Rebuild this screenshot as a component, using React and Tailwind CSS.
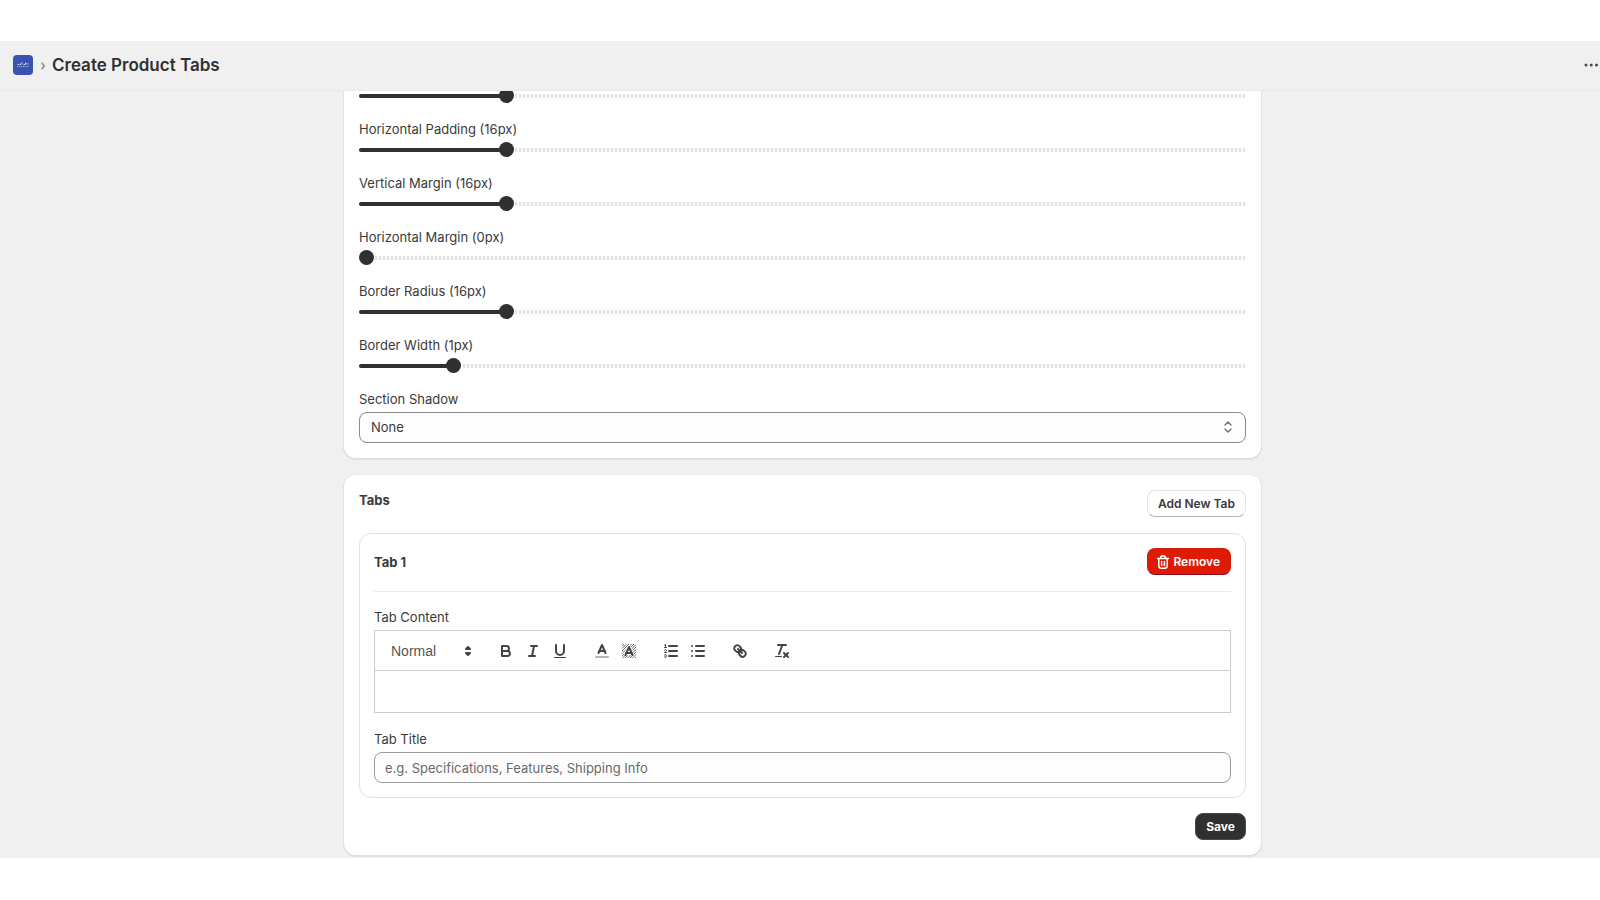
import { useState } from 'react';

const sliders = [
  { id: 'vertical-padding', label: 'Vertical Padding', value: 16, max: 100, hideLabel: true },
  { id: 'horizontal-padding', label: 'Horizontal Padding', value: 16, max: 100 },
  { id: 'vertical-margin', label: 'Vertical Margin', value: 16, max: 100 },
  { id: 'horizontal-margin', label: 'Horizontal Margin', value: 0, max: 100 },
  { id: 'border-radius', label: 'Border Radius', value: 16, max: 100 },
  { id: 'border-width', label: 'Border Width', value: 1, max: 10 },
];

const RangeSlider = ({ id, label, initial, max, hideLabel }) => {
  const [value, setValue] = useState(initial);
  const percent = (value / max) * 100;

  return (
    <div className="flex flex-col gap-[3px]">
      {!hideLabel && (
        <label htmlFor={id} className="leading-5">{label} ({value}px)</label>
      )}
      <div className="relative h-[15px]">
        <div className="absolute inset-x-0 top-[6px] h-1 rounded-full bg-[repeating-linear-gradient(90deg,#e1e1e1_0px,#e1e1e1_2px,#fbfbfb_2px,#fbfbfb_4px)]" />
        {value > 0 && (
          <div
            className="absolute left-0 top-[6px] h-1 rounded-full bg-[#303030]"
            style={{ width: `${percent}%` }}
          />
        )}
        <input
          id={id}
          type="range"
          min="0"
          max={max}
          value={value}
          aria-label={hideLabel ? label : undefined}
          onChange={(e) => setValue(Number(e.target.value))}
          className="absolute inset-0 m-0 h-[15px] w-full cursor-pointer appearance-none bg-transparent [&::-webkit-slider-thumb]:h-[15px] [&::-webkit-slider-thumb]:w-[15px] [&::-webkit-slider-thumb]:appearance-none [&::-webkit-slider-thumb]:rounded-full [&::-webkit-slider-thumb]:bg-[#303030]"
        />
      </div>
    </div>
  );
};

const Icon = ({ children }) => (
  <svg viewBox="0 0 18 18" className="h-[18px] w-[18px]" fill="none" stroke="#444" strokeWidth="2" strokeLinecap="round" strokeLinejoin="round">
    {children}
  </svg>
);

const toolGroups = [
  [
    {
      name: 'Bold',
      icon: (
        <>
          <path d="M5,4H9.5A2.5,2.5,0,0,1,12,6.5v0A2.5,2.5,0,0,1,9.5,9H5V4Z" />
          <path d="M5,9h5.5A2.5,2.5,0,0,1,13,11.5v0A2.5,2.5,0,0,1,10.5,14H5V9Z" />
        </>
      ),
    },
    {
      name: 'Italic',
      icon: (
        <>
          <line x1="7" x2="13" y1="4" y2="4" />
          <line x1="5" x2="11" y1="14" y2="14" />
          <line x1="8" x2="10" y1="14" y2="4" />
        </>
      ),
    },
    {
      name: 'Underline',
      icon: (
        <>
          <path d="M5,3V9a4.012,4.012,0,0,0,4,4H9a4.012,4.012,0,0,0,4-4V3" />
          <rect x="3" y="15" width="12" height="1" rx="0.5" fill="#444" stroke="none" />
        </>
      ),
    },
  ],
  [
    {
      name: 'Text color',
      icon: (
        <>
          <line x1="3" x2="15" y1="15" y2="15" opacity="0.4" />
          <polyline points="5.5 11 9 3 12.5 11" />
          <line x1="11.63" x2="6.38" y1="9" y2="9" />
        </>
      ),
    },
    {
      name: 'Background color',
      icon: (
        <>
          {/* hatching */}
          <path
            strokeWidth="0.8"
            strokeLinecap="butt"
            d="M2,4L4,2M2,6.5L6.5,2M2,9L9,2M2,11.5L11.5,2M2,14L14,2M2.5,16L16,2.5M5,16L16,5M7.5,16L16,7.5M10,16L16,10M12.5,16L16,12.5M15,16L16,15"
          />
          <path stroke="#fff" strokeWidth="4" strokeLinecap="butt" d="M5.5 13L9 5l3.5 8M11.5 11h-5" />
          <polyline points="5.5 13 9 5 12.5 13" />
          <line x1="11.63" x2="6.38" y1="11" y2="11" />
        </>
      ),
    },
  ],
  [
    {
      name: 'Numbered list',
      icon: (
        <>
          <line x1="7" x2="15" y1="4" y2="4" />
          <line x1="7" x2="15" y1="9" y2="9" />
          <line x1="7" x2="15" y1="14" y2="14" />
          <g strokeWidth="1">
            <path d="M2.5,5.5h2M2.6,3L3.5,2.5V5.5" />
            <path d="M4.5,10.5h-2c0-.234,1.85-1.076,1.85-2.234A0.959,0.959,0,0,0,2.5,8.156" />
            <path d="M2.5,14.846a0.959,0.959,0,0,0,1.85-.109A0.7,0.7,0,0,0,3.75,14a0.688,0.688,0,0,0,.6-0.736,0.959,0.959,0,0,0-1.85-.109" />
          </g>
        </>
      ),
    },
    {
      name: 'Bulleted list',
      icon: (
        <>
          <line x1="7" x2="15" y1="4" y2="4" />
          <line x1="7" x2="15" y1="9" y2="9" />
          <line x1="7" x2="15" y1="14" y2="14" />
          <g fill="#444" stroke="none">
            <circle cx="3" cy="4" r="1" />
            <circle cx="3" cy="9" r="1" />
            <circle cx="3" cy="14" r="1" />
          </g>
        </>
      ),
    },
  ],
  [
    {
      name: 'Link',
      icon: (
        <>
          <line x1="7" x2="11" y1="7" y2="11" />
          <path d="M8.9,4.577a3.476,3.476,0,0,1,.36,4.679A3.476,3.476,0,0,1,4.577,8.9C3.185,7.5,2.035,6.4,4.217,4.217S7.5,3.185,8.9,4.577Z" />
          <path d="M13.423,9.1a3.476,3.476,0,0,0-4.679-.36,3.476,3.476,0,0,0,.36,4.679c1.392,1.392,2.5,2.542,4.679.36S14.815,10.5,13.423,9.1Z" />
        </>
      ),
    },
  ],
  [
    {
      name: 'Clear formatting',
      icon: (
        <>
          <line x1="5" x2="13" y1="3" y2="3" />
          <line x1="6" x2="9.35" y1="12" y2="3" />
          <line x1="11" x2="15" y1="11" y2="15" />
          <line x1="15" x2="11" y1="11" y2="15" />
          <rect x="2" y="14" width="7" height="1" rx="0.5" fill="#444" stroke="none" />
        </>
      ),
    },
  ],
];

const Editor = () => (
  <div className="border border-[#ccc]">
    <div className="flex h-10 items-center gap-[15px] border-b border-[#ccc] px-2">
      <div className="relative w-[94px]">
        <select aria-label="Text style" className="w-full appearance-none bg-transparent pl-2 font-['Liberation_Sans',sans-serif] text-sm leading-6 text-[#555]">
          <option>Normal</option>
          <option>Heading 1</option>
          <option>Heading 2</option>
        </select>
        <svg viewBox="0 0 18 18" className="pointer-events-none absolute right-0 top-[3px] h-[18px] w-[18px]" fill="#444" stroke="#444" strokeWidth="2" strokeLinejoin="round">
          <polygon points="7 11 9 13 11 11" />
          <polygon points="7 7 9 5 11 7" />
        </svg>
      </div>
      {toolGroups.map((group, index) => (
        <div key={index} className="flex">
          {group.map((tool) => (
            <button key={tool.name} type="button" aria-label={tool.name} className="flex h-6 w-[27px] items-center justify-center">
              <Icon>{tool.icon}</Icon>
            </button>
          ))}
        </div>
      ))}
    </div>
    <div contentEditable suppressContentEditableWarning role="textbox" aria-label="Tab Content" className="h-[41px] px-4 py-3 outline-none" />
  </div>
);

const Header = () => (
  <header className="flex h-[50px] shrink-0 items-center border-b border-[#e8e8e8] pb-[2px] pl-[13px] pr-px">
    <svg viewBox="0 0 20 20" className="h-5 w-5">
      <rect width="20" height="20" rx="4" fill="#3a53b0" />
      <path d="M4.5 9.5h2M7.5 8.5v1.5M9 9.5V7.5M10.5 9.5h1.5M12.5 7.5v2M14 8v1.5M15.5 9h.5" stroke="#c5d2f3" strokeWidth="1" />
      <path d="M4 11.5h12" stroke="#8ba0dc" strokeWidth="1" strokeDasharray="1.5 0.5" />
    </svg>
    <svg viewBox="0 0 20 20" className="h-5 w-[19px]" fill="none" stroke="#8a8a8a" strokeWidth="1.5" strokeLinecap="round" strokeLinejoin="round">
      <path d="M9.5 8l2.5 3-2.5 3" />
    </svg>
    <h1 className="flex-1 text-[17px] font-semibold leading-6 text-[#303030]">Create Product Tabs</h1>
    <button type="button" aria-label="More actions">
      <svg viewBox="0 0 16 16" className="h-4 w-4" fill="#4a4a4a">
        <circle cx="3" cy="8" r="1.5" />
        <circle cx="8.25" cy="8" r="1.5" />
        <circle cx="13.5" cy="8" r="1.5" />
      </svg>
    </button>
  </header>
);

const cardClass = 'rounded-xl bg-white p-[15px] shadow-[0_1px_1px_1px_rgba(0,0,0,0.07)]';

const App = () => {
  return (
    <div className="h-screen bg-white pb-[42px] pt-[41px] font-['Inter',sans-serif] text-[13px] text-[#3a3a3a]">
      <div className="flex h-full flex-col bg-[#f0f0f0]">
        <Header />

        <main className="flex min-h-0 flex-1 flex-col justify-end overflow-hidden pb-[3px] pl-[5px]">
          <div className="mx-auto flex w-full max-w-[917px] flex-col gap-[17px]">
            {/* Section styling */}
            <section className={cardClass}>
              <div className="flex flex-col gap-4">
                {sliders.map((slider) => (
                  <RangeSlider
                    key={slider.id}
                    id={slider.id}
                    label={slider.label}
                    initial={slider.value}
                    max={slider.max}
                    hideLabel={slider.hideLabel}
                  />
                ))}
                <div className="flex flex-col gap-[3px]">
                  <label htmlFor="section-shadow" className="leading-5">Section Shadow</label>
                  <div className="relative">
                    <select id="section-shadow" className="block h-[31px] w-full appearance-none rounded-lg border border-[#8a8a8a] bg-[#fdfdfd] px-[11px]">
                      <option>None</option>
                      <option>Small</option>
                      <option>Large</option>
                    </select>
                    <svg viewBox="0 0 20 20" className="pointer-events-none absolute right-2 top-[5px] h-5 w-5" fill="none" stroke="#777" strokeWidth="1.5" strokeLinecap="round" strokeLinejoin="round">
                      <path d="M7 8l3-3 3 3M7 12l3 3 3-3" />
                    </svg>
                  </div>
                </div>
              </div>
            </section>

            {/* Tabs */}
            <section className={cardClass}>
              <div className="flex items-start justify-between">
                <h2 className="font-bold leading-5">Tabs</h2>
                <button type="button" className="h-[27px] rounded-lg border border-[#e3e3e3] border-b-[#b5b5b5] bg-white px-[10px] text-xs font-semibold">
                  Add New Tab
                </button>
              </div>

              <div className="mt-4 rounded-xl border border-[#e0e0e0] p-[14px]">
                <div className="flex items-center justify-between border-b border-[#ebebeb] pb-4">
                  <h3 className="font-bold leading-5">Tab 1</h3>
                  <button type="button" className="flex h-[27px] items-center rounded-lg border border-[#c9200a] border-b-[#8e0b21] bg-[#df1b05] pl-[5px] pr-[10px] text-xs font-semibold text-white">
                    <svg viewBox="0 0 20 20" className="h-5 w-5" fill="none" stroke="currentColor" strokeWidth="1.5" strokeLinecap="round" strokeLinejoin="round">
                      <path d="M4.5 6.5h11M7.5 6.3a2.5 2.5 0 0 1 5 0M5.8 6.8v7a2.5 2.5 0 0 0 2.5 2.5h3.4a2.5 2.5 0 0 0 2.5-2.5v-7M8.6 9.5v4M11.4 9.5v4" />
                    </svg>
                    Remove
                  </button>
                </div>

                <div className="mt-[15px] flex flex-col gap-[3px]">
                  <span className="leading-5">Tab Content</span>
                  <Editor />
                </div>

                <div className="mt-4 flex flex-col gap-[3px]">
                  <label htmlFor="tab-title" className="leading-5">Tab Title</label>
                  <input
                    id="tab-title"
                    type="text"
                    placeholder="e.g. Specifications, Features, Shipping Info"
                    className="h-[31px] rounded-lg border border-[#9a9a9a] bg-[#fdfdfd] px-[10px] placeholder:text-[#6a6a6a]"
                  />
                </div>
              </div>

              <div className="mt-[15px] flex justify-end">
                <button type="button" className="h-[27px] rounded-lg border border-[#4a4a4a] bg-[#303030] px-[10px] text-xs font-bold text-white">
                  Save
                </button>
              </div>
            </section>
          </div>
        </main>
      </div>
    </div>
  );
};

export default App;
